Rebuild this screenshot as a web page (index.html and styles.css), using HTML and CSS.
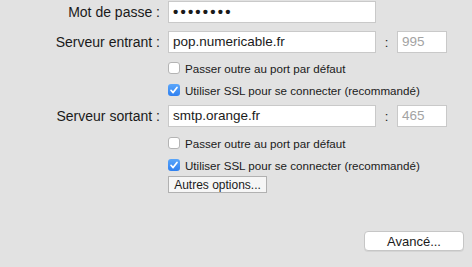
FILE: index.html
```html
<!DOCTYPE html>
<html lang="fr">
  <head>
    <meta charset="utf-8">
    <title>Comptes</title>
    <link rel="stylesheet" href="styles.css">
  </head>
  <body>
    <section id=panel>
      <div class="row field-row first">
        <span class="label">Mot de passe :</span>
        <div class="input wide secret">&bull;&bull;&bull;&bull;&bull;&bull;&bull;&bull;</div>
      </div>

      <div class="row field-row gap-lg">
        <span class="label">Serveur entrant :</span>
        <div class="input wide">pop.numericable.fr</div>
        <span class="colon">:</span>
        <div class="input port">995</div>
      </div>
      <div class="row check-row gap-sm">
        <span class="box"></span>
        <span>Passer outre au port par défaut</span>
      </div>
      <div class="row check-row">
        <span class="box checked"><svg viewBox="0 0 12 12"><path d="M3 6.3 L5.1 8.6 L9 3.4"/></svg></span>
        <span>Utiliser SSL pour se connecter (recommandé)</span>
      </div>

      <div class="row field-row gap-sm">
        <span class="label">Serveur sortant :</span>
        <div class="input wide">smtp.orange.fr</div>
        <span class="colon">:</span>
        <div class="input port">465</div>
      </div>
      <div class="row check-row gap-md">
        <span class="box"></span>
        <span>Passer outre au port par défaut</span>
      </div>
      <div class="row check-row">
        <span class="box checked"><svg viewBox="0 0 12 12"><path d="M3 6.3 L5.1 8.6 L9 3.4"/></svg></span>
        <span>Utiliser SSL pour se connecter (recommandé)</span>
      </div>

      <div class="row indent">
        <button class="square">Autres options...</button>
      </div>

      <div class="row footer">
        <button class="rounded">Avancé...</button>
      </div>
    </section>
  </body>
</html>
```

FILE: styles.css
```css
* {
  box-sizing: border-box;
}

body {
  margin: 0;
  width: 472px;
  height: 267px;
  overflow: hidden;
  background: #e2e2e2;
  font-family: "Liberation Sans", Arial, sans-serif;
  color: #1a1a1a;
}

.row {
  display: flex;
  align-items: center;
}

.field-row {
  height: 22px;
}

.first {
  margin-top: 1px;
}

.gap-lg {
  margin-top: 8px;
}

.gap-md {
  margin-top: 5px;
}

.gap-sm {
  margin-top: 4px;
}

.label {
  width: 160px;
  margin-right: 8px;
  text-align: right;
  font-size: 14px;
}

.input {
  height: 22px;
  background: #fff;
  border: 1px solid #c9c9c9;
  padding: 0 4px;
  font-size: 13.5px;
  line-height: 20px;
  white-space: nowrap;
}

.wide {
  width: 208px;
}

.secret {
  font-size: 15px;
  letter-spacing: 2.2px;
  font-weight: bold;
}

.colon {
  width: 21px;
  text-align: center;
  font-size: 13px;
}

.port {
  width: 50px;
  color: #a3a3a3;
}

.check-row {
  height: 22px;
  padding-left: 168px;
  font-size: 11.6px;
}

.box {
  width: 12px;
  height: 12px;
  margin-right: 5px;
  border: 1px solid #b4b4b4;
  border-radius: 3px;
  background: #fff;
  display: flex;
}

.box.checked {
  border: 0;
  background: linear-gradient(#5aa6fa, #2f80f0);
}

.box svg {
  width: 12px;
  height: 12px;
}

.box path {
  fill: none;
  stroke: #fff;
  stroke-width: 1.7;
  stroke-linecap: round;
  stroke-linejoin: round;
}

.indent {
  padding-left: 168px;
}

button {
  font-family: "Liberation Sans", Arial, sans-serif;
  color: #1a1a1a;
  padding: 0;
  cursor: default;
}

.square {
  width: 99px;
  height: 17px;
  font-size: 12px;
  background: #f6f6f6;
  border: 1px solid #b1b1b1;
  border-radius: 0;
}

.footer {
  justify-content: flex-end;
  padding-right: 8px;
  margin-top: 38px;
}

.rounded {
  width: 100px;
  height: 20px;
  font-size: 13px;
  background: #fff;
  border: 1px solid #c6c6c6;
  border-radius: 4px;
  box-shadow: 0 1px 0 rgba(0, 0, 0, 0.06);
}
```
